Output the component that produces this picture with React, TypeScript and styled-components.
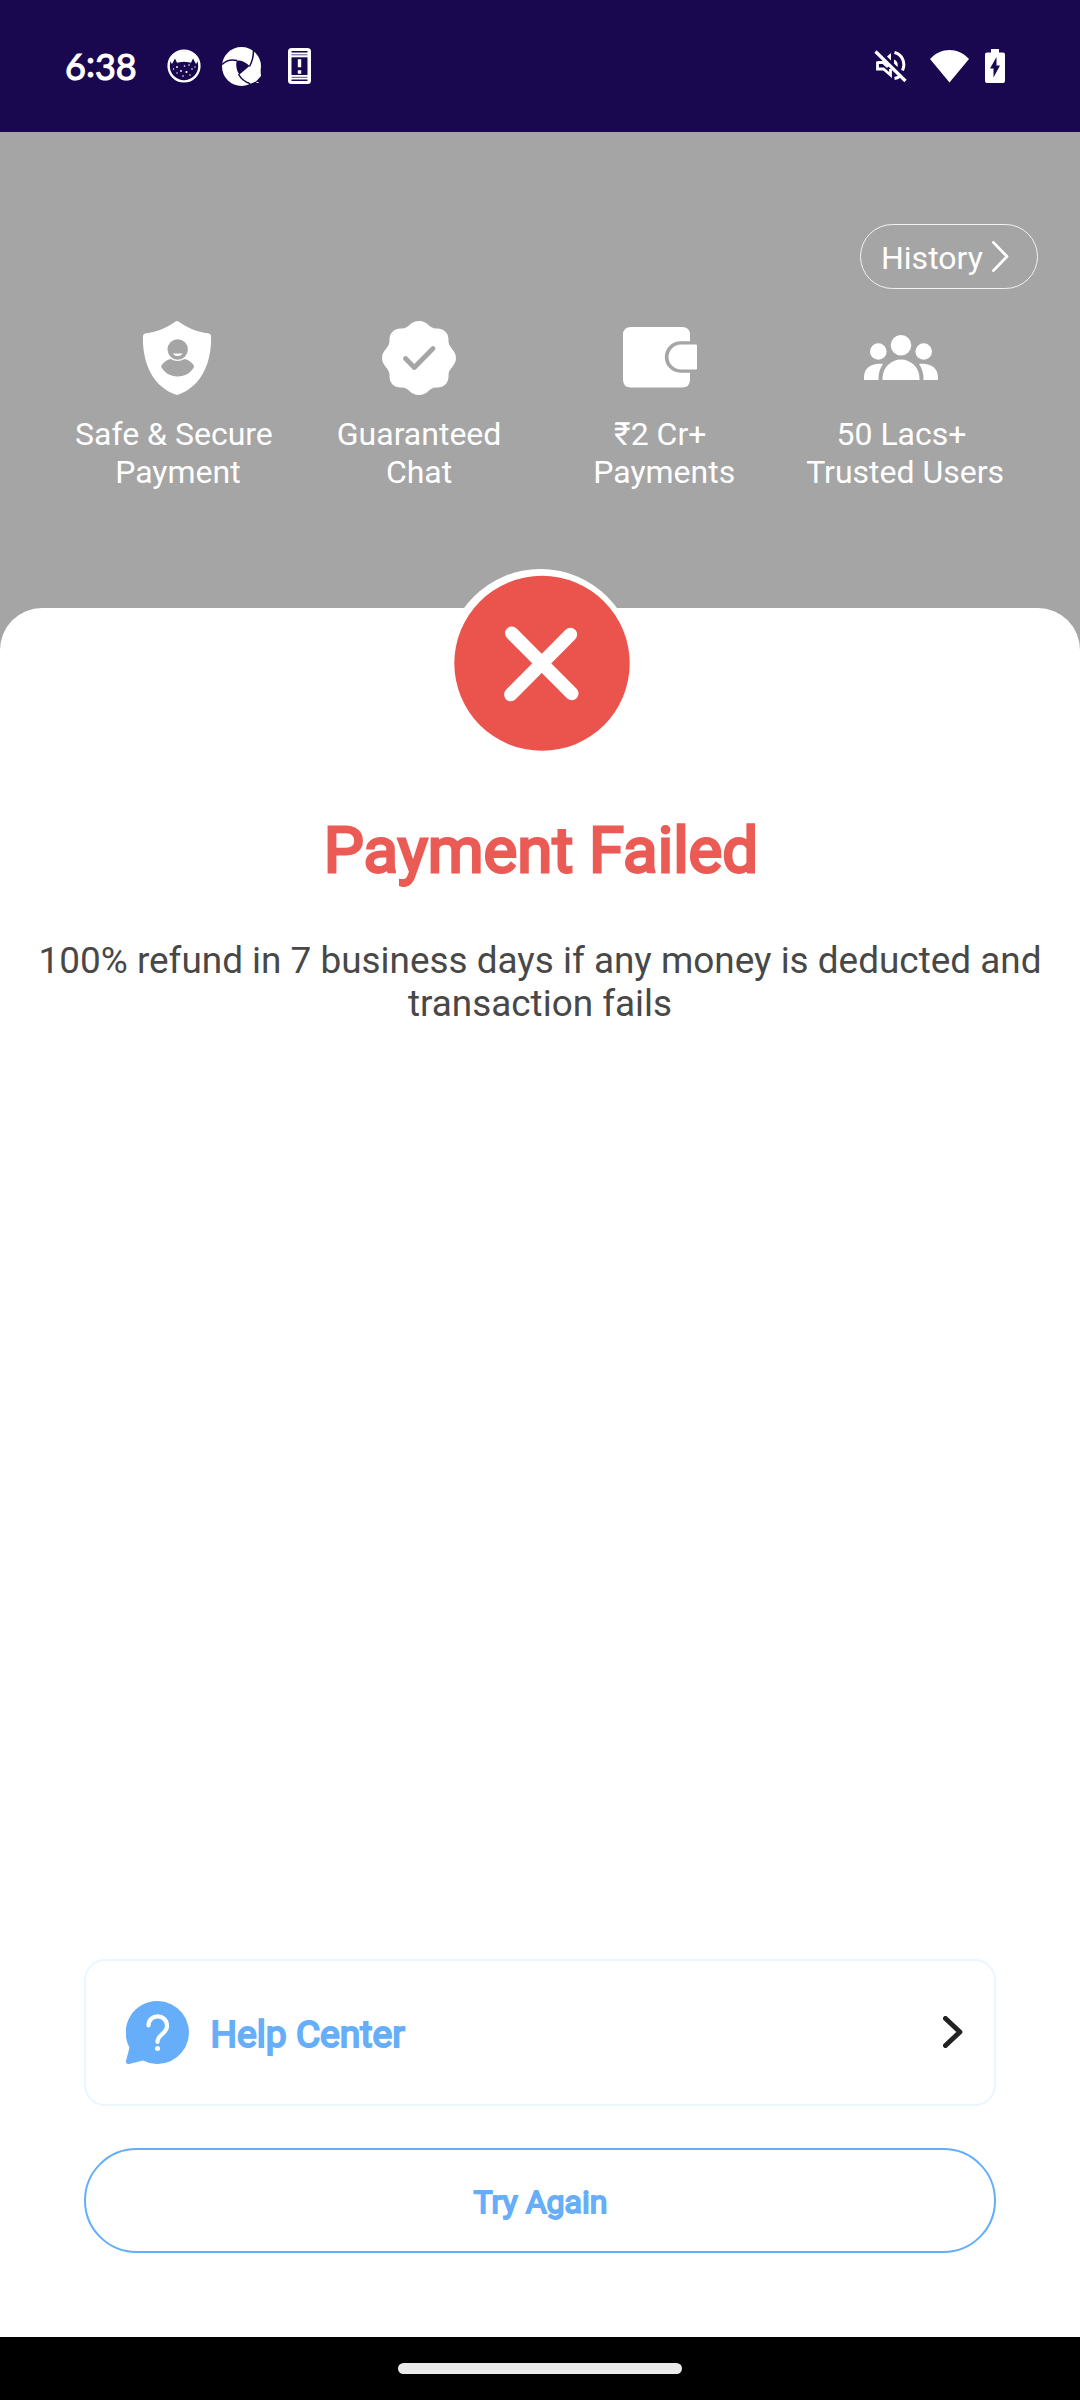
import React from "react";
import styled, { createGlobalStyle } from "styled-components";

const GlobalStyle = createGlobalStyle`
  * { box-sizing: border-box; }
  body { margin: 0; background: #fff; font-family: Roboto, "Noto Sans", sans-serif; }
  svg { display: block; flex: none; }
`;

const Screen = styled.div`
  width: 1080px;
  height: 2400px;
  display: flex;
  flex-direction: column;
  background: #a5a5a5;
  overflow: hidden;
`;

const StatusBar = styled.header`
  height: 132px;
  flex: none;
  display: flex;
  justify-content: space-between;
  align-items: center;
  padding: 0 75px 0 65px;
  background: #190850;
  color: #fff;
`;

const StatusGroup = styled.div`
  display: flex;
  align-items: center;
`;

const Clock = styled.span`
  width: 102px;
  font: 400 36px/40px Lato, sans-serif;
  -webkit-text-stroke: 1.1px #fff;
`;

const Colon = styled.span`
  display: inline-block;
  line-height: 30px;
  vertical-align: 3px;
`;

const IconSlot = styled.span<{ $gap: number }>`
  margin-left: ${(p) => p.$gap}px;
`;

const Hero = styled.section`
  height: 476px;
  flex: none;
  display: flex;
  flex-direction: column;
  padding-top: 92px;
  color: #fff;
`;

const HistoryButton = styled.button`
  align-self: flex-end;
  width: 178px;
  height: 65px;
  margin-right: 42px;
  padding: 2px 0 0 20px;
  display: flex;
  align-items: center;
  gap: 9.5px;
  border: 1px solid #f2f2f2;
  border-radius: 33px;
  background: none;
  color: #fff;
  font: 400 32px/38px Roboto, sans-serif;
`;

const HistoryChevron = styled.span`
  margin-top: -2px;
`;

const Features = styled.div`
  display: grid;
  grid-template-columns: repeat(4, 241.2px);
  padding: 32px 0 0 56.8px;
`;

const Feature = styled.div`
  display: flex;
  flex-direction: column;
  align-items: center;
  gap: 20px;
`;

const FeatureLabel = styled.div`
  padding-left: 1px;
  white-space: pre;
  text-align: center;
  font-size: 32px;
  line-height: 38px;
`;

const Sheet = styled.main`
  height: 1729px;
  flex: none;
  display: flex;
  flex-direction: column;
  align-items: center;
  background: #fff;
  border-radius: 42px 42px 0 0;
`;

const Badge = styled.div`
  width: 189px;
  height: 189px;
  margin-top: -39px;
  border-radius: 50%;
  background: #fff;
`;

const Title = styled.h1`
  margin: 56px 0 0;
  padding-left: 2px;
  font-size: 63.6px;
  line-height: 74px;
  font-weight: 400;
  color: #eb5b55;
  -webkit-text-stroke: 2.8px #eb5b55;
`;

const Note = styled.p`
  margin: 51px 0 0;
  width: 1040px;
  text-align: center;
  font-size: 36.9px;
  line-height: 43px;
  color: #484848;
`;

const Actions = styled.div`
  width: 912px;
  margin: auto 0 84px;
  display: flex;
  flex-direction: column;
  gap: 42px;
`;

const HelpCard = styled.button`
  height: 147px;
  display: flex;
  align-items: center;
  padding: 0 31px 0 40px;
  border: 2px solid #eaf5ff;
  border-radius: 21px;
  background: #fff;
`;

const HelpChevron = styled.span`
  margin-top: -1px;
`;

const HelpLabel = styled.span`
  flex: 1;
  margin-left: 21.5px;
  padding-top: 2px;
  text-align: left;
  font: 400 37.2px/44px Roboto, sans-serif;
  color: #66aef9;
  -webkit-text-stroke: 2px #66aef9;
`;

const RetryButton = styled.button`
  height: 105px;
  padding: 2px 0 0 1px;
  border: 2px solid #62aefb;
  border-radius: 53px;
  background: #fff;
  font: 400 32.1px/38px Roboto, sans-serif;
  color: #66aef9;
  -webkit-text-stroke: 1.8px #66aef9;
`;

const NavBar = styled.footer`
  height: 63px;
  flex: none;
  display: flex;
  align-items: center;
  justify-content: center;
  background: #000;
`;

const NavHandle = styled.div`
  width: 284px;
  height: 11px;
  border-radius: 5.5px;
  background: #ebebeb;
`;

const CatIcon = () => (
  <svg width="34" height="34" viewBox="0 0 34 34">
    <circle cx="17" cy="17" r="15.4" fill="none" stroke="#fff" strokeWidth="2.4" />
    <path d="M3 12C5 5 10 2.500 17 2.500S29 5 31 12L29 15 26 9.500 24 13.800 21.500 13.200Q17 12.400 12.500 13.200L10 13.800 8 9.500 5 15Z" fill="#fff" />
    <g fill="#fff">
      <circle cx="10" cy="18" r=".9" /><circle cx="17.500" cy="17" r=".8" /><circle cx="22" cy="16" r=".8" />
      <circle cx="14" cy="22" r=".9" /><circle cx="19.500" cy="23" r="1.100" /><circle cx="25" cy="20" r=".8" />
      <circle cx="10" cy="24" r=".7" /><circle cx="16" cy="27" r=".8" /><circle cx="23" cy="26" r=".7" />
      <circle cx="6.500" cy="20" r=".7" /><circle cx="28" cy="18" r=".7" />
    </g>
  </svg>
);

const ApertureIcon = () => (
  <svg width="39" height="39" viewBox="0 0 39 39">
    <circle cx="19.500" cy="19.500" r="19.500" fill="#fff" />
    <path d="M14.800 13.500C19 13 24 15 27.500 19L17.500 27.500C14.500 24 13.500 18 14.800 13.500Z" fill="#190850" />
    <g fill="none" stroke="#190850" strokeWidth="1.500">
      <path d="M0 17.500C4 13.500 9 12 15 13.500" />
      <path d="M31 0C32 6 31 13 27.500 19.500" />
      <path d="M16.500 27C19 32 23 35 28 36.500" />
    </g>
    <path d="M28.500 36.500L39 29V39H25Z" fill="#190850" />
    <path d="M27 35.500C32 35 36 30 38.500 23L39 29 34 34.500 29 36.500Z" fill="#fff" />
    <path d="M34.500 35.500H36.500" stroke="#fff" strokeWidth="1" />
  </svg>
);

const PhoneAlertIcon = () => (
  <svg width="23" height="36" viewBox="0 0 23 36">
    <rect width="23" height="36" rx="3.500" fill="#fff" />
    <path d="M3.500 3.800H19.500M3.500 32.200H19.500" stroke="#190850" strokeWidth="1.600" />
    <path d="M3.500 6.800H19.500M3.500 29.300H19.500" stroke="#190850" strokeWidth=".7" />
    <rect x="3.500" y="9.300" width="16" height="17.700" fill="#190850" />
    <path d="M11.500 11.300V19.300M11.500 22.200V25.700" stroke="#fff" strokeWidth="3.400" />
  </svg>
);

const MuteIcon = () => (
  <svg width="33" height="33" viewBox="0 0 33 33" fill="none" stroke="#fff">
    <path d="M3.500 11.500V19H9.500L16.500 25V19M3.500 12.500H9L14 17" strokeWidth="2.800" />
    <path d="M13 6.500L17 3V10.500ZM20 9.500C23 11 24.500 13.500 23.500 17L20 13.500Z" fill="#fff" stroke="none" />
    <path d="M20.500 2.500C28 4.500 32 12 28.500 20.500M20.500 28.500Q23.500 28 25.500 26.500" strokeWidth="3" />
    <path d="M1.500 1.500L31.500 31" strokeWidth="3.200" />
  </svg>
);

const WifiIcon = () => (
  <svg width="39" height="33" viewBox="0 0 39 33">
    <path d="M0 9C11 -3 28 -3 39 9L19.500 32.500Z" fill="#fff" />
  </svg>
);

const BatteryIcon = () => (
  <svg width="20" height="34" viewBox="0 0 20 34">
    <path d="M6 0H14V3.500H18Q20 3.500 20 5.500V32Q20 34 18 34H2Q0 34 0 32V5.500Q0 3.500 2 3.500H6Z" fill="#fff" />
    <path d="M11.500 8V16.500H15L8.500 28.500V19.500H5Z" fill="#190850" />
  </svg>
);

const ShieldIcon = () => (
  <svg width="74" height="74" viewBox="0 0 74 74">
    <path d="M35.500 .5Q37 -.5 38.500 .5C46 6 56 11 69 12.500Q71 13 71 15C72 43 60 66 38.500 73.600Q37 74.200 35.500 73.600C14 66 2 43 3 15Q3 13 5 12.500C18 11 28 6 35.500 .5Z" fill="#fff" />
    <circle cx="37.700" cy="28.500" r="10.200" fill="#a5a5a5" />
    <path d="M32.700 32.400H42.700Q41 35 37.700 35T32.700 32.400Z" fill="#fff" />
    <path d="M30.500 38Q37.700 42 44.500 38Q51.500 39.500 54.300 45.500C51 52 45 55.500 37.700 55.500S24.500 52 21 45.500Q24 39.500 30.500 38Z" fill="#a5a5a5" />
  </svg>
);

const SealIcon = () => (
  <svg width="74" height="74" viewBox="0 0 74 74">
    <path d="M37 0C46 0 47 7.500 54 7.500C62 7 67 12 66.500 20C66.500 27 74 29 74 37S66.500 47 66.500 54C67 62 62 67 54 66.500C47 66.500 46 74 37 74S27 66.500 20 66.500C12 67 7 62 7.500 54C7.500 47 0 45 0 37S7.500 27 7.500 20C7 12 12 7 20 7.500C27 7.500 28 0 37 0Z" fill="#fff" />
    <path d="M23.500 37.500L32.300 46.500 51 27.500" fill="none" stroke="#a5a5a5" strokeWidth="4.800" strokeLinecap="round" strokeLinejoin="round" />
  </svg>
);

const WalletIcon = () => (
  <svg width="74" height="74" viewBox="0 0 74 74" fill="#fff">
    <path d="M8 6H59Q67 6 67 14V20.300H57.500A15.700 15.700 0 0 0 57.500 51.700H67V58.500Q67 66.500 59 66.500H8Q0 66.500 0 58.500V14Q0 6 8 6Z" />
    <path d="M58 23.500H73Q74 23.500 74 24.500V47.500Q74 48.500 73 48.500H58A12.500 12.500 0 0 1 58 23.500Z" />
  </svg>
);

const UsersIcon = () => (
  <svg width="74" height="74" viewBox="0 0 74 74" fill="#fff">
    <circle cx="37" cy="24.300" r="10.300" />
    <circle cx="14.300" cy="30.500" r="8.300" />
    <circle cx="59.700" cy="30.500" r="8.300" />
    <path d="M18.500 59V57A18.500 18.500 0 0 1 55.500 57V59Z" />
    <path d="M0 59V56C0 47 8 41.500 19 43C15.500 48 14.300 53 14.500 59Z" />
    <path d="M74 59V56C74 47 66 41.500 55 43C58.500 48 59.700 53 59.500 59Z" />
  </svg>
);

const FailIcon = () => (
  <svg width="189" height="189" viewBox="0 0 189 189">
    <ellipse cx="96" cy="94.300" rx="87.700" ry="87.500" fill="#eb544d" />
    <path d="M65.800 64.300L125.800 124.500M64.800 125.600L124.400 65.600" stroke="#fff" strokeWidth="13.500" strokeLinecap="round" />
  </svg>
);

const HelpIcon = () => (
  <svg width="63" height="63" viewBox="0 0 63 63">
    <path d="M31.500 0A31.500 31.500 0 1 1 17 59.500L3 62.900Q-.5 63.500 0 60L3.500 46.500A31.500 31.500 0 0 1 31.500 0Z" fill="#66aef9" />
    <path d="M22.500 24.500C22.500 12 41 12.500 41 25C41 33 31.500 33 31.500 41" fill="none" stroke="#fff" strokeWidth="4.200" strokeLinecap="round" />
    <circle cx="31.500" cy="47.500" r="2.500" fill="#fff" />
  </svg>
);

interface ChevronProps {
  width: number;
  height: number;
  stroke: string;
  weight: number;
}

const Chevron = ({ width, height, stroke, weight }: ChevronProps) => {
  const h = weight / 2;
  return (
    <svg width={width} height={height}>
      <path
        d={`M${h} ${h}L${width - h - 0.6} ${height / 2}L${h} ${height - h}`}
        fill="none"
        stroke={stroke}
        strokeWidth={weight}
        strokeLinecap="round"
        strokeLinejoin="round"
      />
    </svg>
  );
};

const features = [
  { icon: <ShieldIcon />, label: "Safe & Secure \nPayment" },
  { icon: <SealIcon />, label: "Guaranteed\nChat" },
  { icon: <WalletIcon />, label: "₹2 Cr+\n Payments" },
  { icon: <UsersIcon />, label: "50 Lacs+\n Trusted Users" },
];

export default function App() {
  return (
    <Screen>
      <GlobalStyle />
      <StatusBar>
        <StatusGroup>
          <Clock>6<Colon>:</Colon>38</Clock>
          <IconSlot $gap={0}><CatIcon /></IconSlot>
          <IconSlot $gap={21}><ApertureIcon /></IconSlot>
          <IconSlot $gap={27}><PhoneAlertIcon /></IconSlot>
        </StatusGroup>
        <StatusGroup>
          <IconSlot $gap={0}><MuteIcon /></IconSlot>
          <IconSlot $gap={23}><WifiIcon /></IconSlot>
          <IconSlot $gap={16}><BatteryIcon /></IconSlot>
        </StatusGroup>
      </StatusBar>
      <Hero>
        <HistoryButton>
          History
          <HistoryChevron>
            <Chevron width={17} height={31} stroke="#fff" weight={2.8} />
          </HistoryChevron>
        </HistoryButton>
        <Features>
          {features.map((f) => (
            <Feature key={f.label}>
              {f.icon}
              <FeatureLabel>{f.label}</FeatureLabel>
            </Feature>
          ))}
        </Features>
      </Hero>
      <Sheet>
        <Badge><FailIcon /></Badge>
        <Title>Payment Failed</Title>
        <Note>100% refund in 7 business days if any money is deducted and transaction fails</Note>
        <Actions>
          <HelpCard>
            <HelpIcon />
            <HelpLabel>Help Center</HelpLabel>
            <HelpChevron>
              <Chevron width={20} height={32} stroke="#222" weight={5} />
            </HelpChevron>
          </HelpCard>
          <RetryButton>Try Again</RetryButton>
        </Actions>
      </Sheet>
      <NavBar><NavHandle /></NavBar>
    </Screen>
  );
}
